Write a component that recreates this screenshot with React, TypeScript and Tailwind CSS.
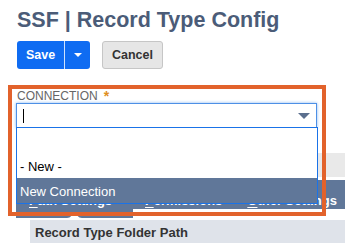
import React from 'react';

const tabs = [
  { key: 'P', rest: 'ath Settings', gap: '' },
  { key: 'P', rest: 'ermissions', gap: 'ml-[12px]' },
  { key: 'O', rest: 'ther Settings', gap: 'ml-[25px]' },
];

const options = ['', '- New -', 'New Connection'];

function ConnectionField() {
  return (
    <div className="relative ml-[16px] mt-[20px] w-[301px]">
      <div className="flex items-start pl-px text-[12px] leading-[14px] text-[#666]">
        CONNECTION
        <span className="ml-[6px] text-[14px] font-bold leading-[14px] text-[#e0901f]">*</span>
      </div>
      <div className="flex h-[25px] items-center justify-between border border-[#4d90e6] bg-white pl-[6px] pr-[6px] shadow-[0_0_3px_#8ab8f2]">
        <span className="h-[14px] w-px bg-black" />
        <svg width="12" height="6" viewBox="0 0 12 6" aria-hidden="true">
          <path d="M0 0h12L6 6z" fill="#5b6f8e" />
        </svg>
      </div>
      <ul className="absolute left-0 top-full z-10 -mt-px w-[302px] border border-[#1a73e8] bg-white">
        {options.map((opt, i) => (
          <li
            key={i}
            className={
              i === options.length - 1
                ? 'h-[25px] bg-[#607799] pl-[3px] pt-[2px] text-[13px] leading-[23px] text-white'
                : 'h-[25px] pl-[3px] pt-[2px] text-[13px] leading-[23px] text-black'
            }>
            {opt}
          </li>
        ))}
      </ul>
    </div>
  );
}

export default function App() {
  return (
    <div className="relative h-[248px] w-[345px] overflow-hidden bg-white font-['Liberation_Sans',Arial,sans-serif]">
      <h1 className="pl-[17px] pt-[8px] text-[21.5px] font-bold leading-[24px] text-[#4b5c78]">
        SSF | Record Type Config
      </h1>

      <div className="mt-[9px] flex gap-[12px] pl-[17px]">
        <div className="flex h-[28px] overflow-hidden rounded-[3px] bg-[#0f6cf2] text-white">
          <button className="w-[47px] text-[12.5px] font-bold">Save</button>
          <span className="w-px bg-white/80" />
          <button className="flex w-[25px] items-center justify-center" aria-label="More">
            <svg width="8" height="4" viewBox="0 0 8 4" aria-hidden="true">
              <path d="M0 0h8L4 4z" fill="white" />
            </svg>
          </button>
        </div>
        <button className="h-[28px] w-[61px] rounded-[3px] border border-[#c6c6c6] bg-[#e6e6e6] text-[12.5px] font-bold text-[#333]">
          Cancel
        </button>
      </div>

      <ConnectionField />

      <div className="ml-[16px] mt-[25px] h-[24px] bg-[#e9e9e9]" />

      <div className="ml-[16px] mt-[3px] flex h-[29px] items-start bg-[#607799] text-[13px] font-bold leading-[15px] text-white">
        {tabs.map((t, i) => (
          <div
            key={i}
            className={
              i === 0
                ? 'relative h-[38px] w-[117px] shrink-0 bg-[#607799] pl-[13px] pt-[13px]'
                : `${t.gap} shrink-0 whitespace-nowrap pt-[13px]`
            }>
            <u className="underline-offset-[2px]">{t.key}</u>
            {t.rest}
            {i === 0 && (
              <svg
                className="absolute bottom-0 left-[51px]"
                width="15"
                height="4"
                viewBox="0 0 15 4"
                aria-hidden="true">
                <path d="M0 4C4 4 5 0 7.5 0S11 4 15 4z" fill="white" />
              </svg>
            )}
          </div>
        ))}
      </div>

      <div className="ml-[30px] mt-[11px] h-[23px] bg-[#dfe3ea] pl-[5px] pt-[3px] text-[13px] font-bold leading-[20px] text-[#333]">
        Record Type Folder Path
      </div>

      <div className="pointer-events-none absolute left-[8px] top-[85px] z-20 h-[131px] w-[318px] border-[4px] border-[#e2622b]" />
    </div>
  );
}
